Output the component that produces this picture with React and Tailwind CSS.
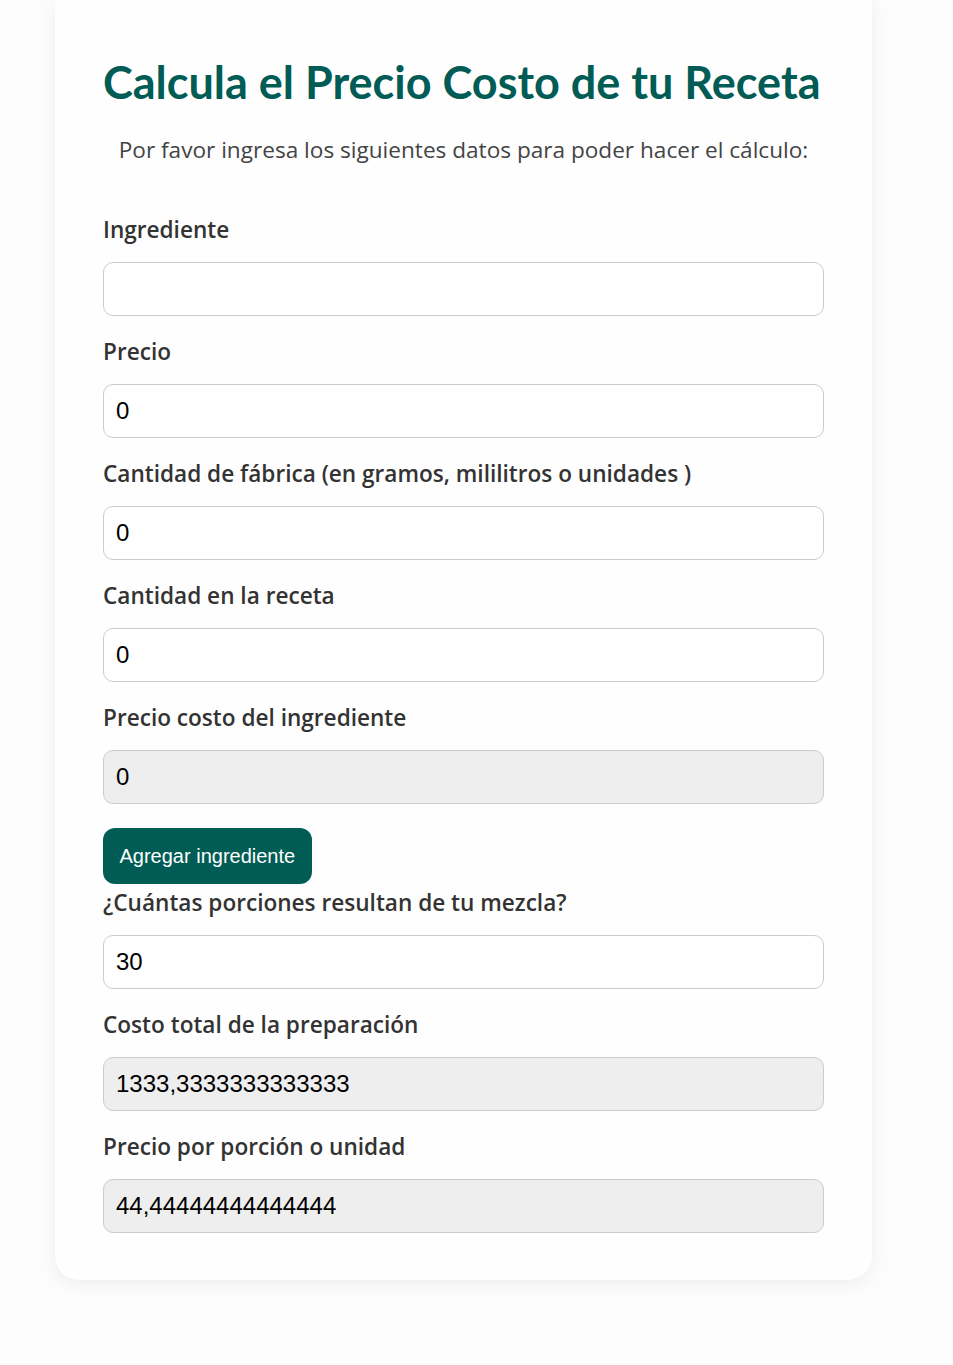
import React from "react";

const seg = { fontFamily: '"Open Sans", "Noto Sans", sans-serif' };

function Field({ label, value, readOnly }) {
  return (
    <div className="flex flex-col">
      <label className="text-[22.6px] leading-[30px] font-semibold text-[#333333] mb-[17px] whitespace-nowrap" style={seg}>
        {label}
      </label>
      <input
        readOnly
        value={value}
        className={
          "h-[54px] w-full rounded-[10px] border border-[#cccccc] px-[12px] text-[24px] text-black outline-none " +
          (readOnly ? "bg-[#eeeeee]" : "bg-white")
        }
        style={{ fontFamily: '"Liberation Sans", Arial, sans-serif' }}
      />
    </div>
  );
}

export default function App() {
  return (
    <div className="min-h-[1365px] bg-[#fcfcfc] w-full">
      <div className="ml-[55px] w-[817px] bg-[#fefefe] rounded-b-[24px] shadow-[0_4px_16px_rgba(0,0,0,0.06)] px-[48px] pt-[52px] pb-[47px]">
        <h1 className="text-[45px] leading-[60px] font-bold text-[#005c55] whitespace-nowrap" style={{ fontFamily: 'Lato, "Open Sans", sans-serif' }}>
          Calcula el Precio Costo de tu Receta
        </h1>
        <p className="mt-[23px] text-center text-[22.6px] leading-[30px] text-[#444444] whitespace-nowrap" style={seg}>
          Por favor ingresa los siguientes datos para poder hacer el cálculo:
        </p>
        <div className="mt-[50px] flex flex-col gap-[21px]">
          <Field label="Ingrediente" value="" />
          <Field label="Precio" value="0" />
          <Field label="Cantidad de fábrica (en gramos, mililitros o unidades )" value="0" />
          <Field label="Cantidad en la receta" value="0" />
          <Field label="Precio costo del ingrediente" value="0" readOnly />
        </div>
        <button
          className="mt-[24px] h-[56px] px-[16.5px] rounded-[12px] bg-[#005c55] text-white text-[20px]"
          style={{ fontFamily: '"Liberation Sans", Arial, sans-serif' }}
        >
          Agregar ingrediente
        </button>
        <div className="mt-[4px] flex flex-col gap-[21px]">
          <Field label="¿Cuántas porciones resultan de tu mezcla?" value="30" />
          <Field label="Costo total de la preparación" value="1333,3333333333333" readOnly />
          <Field label="Precio por porción o unidad" value="44,44444444444444" readOnly />
        </div>
      </div>
    </div>
  );
}
